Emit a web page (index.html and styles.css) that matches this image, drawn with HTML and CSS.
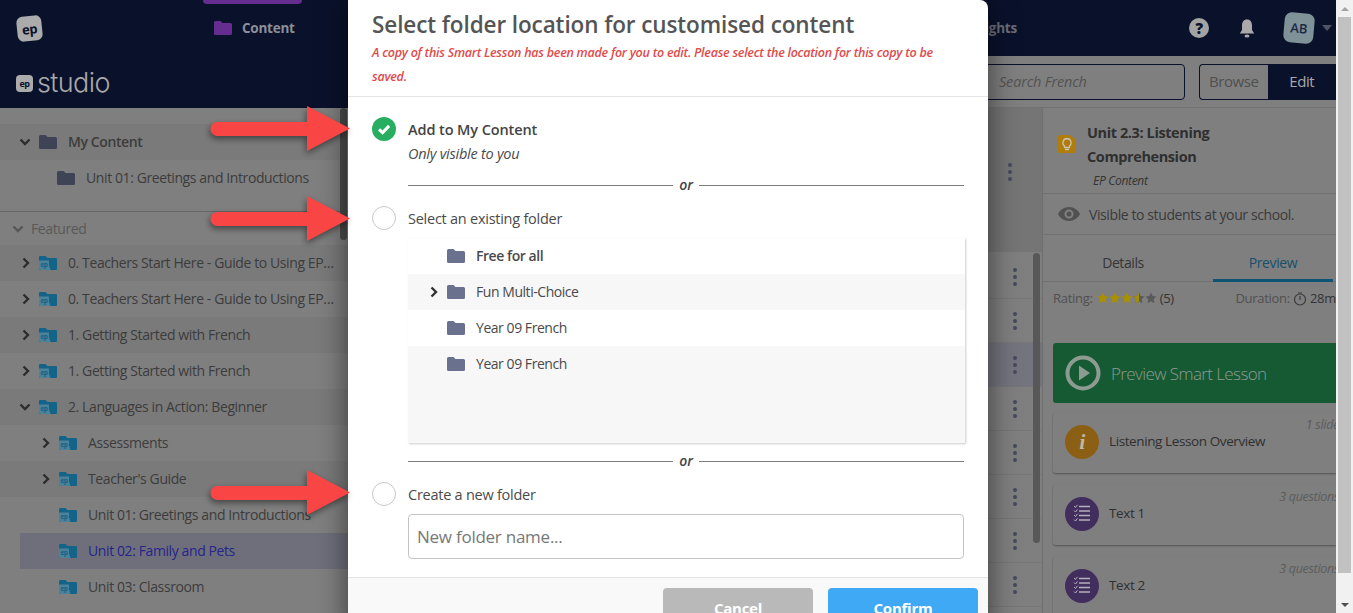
FILE: index.html
```html
<!DOCTYPE html>
<html lang="en">
<head>
<meta charset="utf-8">
<title>EP Studio</title>
<link rel="stylesheet" href="styles.css">
</head>
<body>
<svg class="defs" width="0" height="0" aria-hidden="true">
  <defs>
    <symbol id="folder" viewBox="0 0 18 14"><path d="M1.5 0H6.5L8.5 2H16.5A1.5 1.5 0 0 1 18 3.500V12.500A1.500 1.500 0 0 1 16.500 14H1.500A1.500 1.500 0 0 1 0 12.500V1.500A1.500 1.500 0 0 1 1.500 0Z" fill="currentColor"/></symbol>
    <symbol id="epfolder" viewBox="0 0 18 14"><path d="M1 0H6.500L8.500 2H17A1 1 0 0 1 18 3V13A1 1 0 0 1 17 14H1A1 1 0 0 1 0 13V1A1 1 0 0 1 1 0Z" fill="#14648a"/><path d="M0 4.500H10V9.500L11.500 14H1A1 1 0 0 1 0 13Z" fill="#4b8199"/><text x="5" y="11" font-size="6.500" font-weight="700" text-anchor="middle" fill="#14648a" font-family="Open Sans">ep</text></symbol>
    <symbol id="chev-r" viewBox="0 0 8 12"><path d="M1.500 1.500L6 6L1.500 10.500" fill="none" stroke="currentColor" stroke-width="2.400"/></symbol>
    <symbol id="chev-d" viewBox="0 0 12 8"><path d="M1.500 1.500L6 6L10.500 1.500" fill="none" stroke="currentColor" stroke-width="2.400"/></symbol>
    <symbol id="dots" viewBox="0 0 4 18"><circle cx="2" cy="2" r="2" fill="currentColor"/><circle cx="2" cy="9" r="2" fill="currentColor"/><circle cx="2" cy="16" r="2" fill="currentColor"/></symbol>
    <symbol id="list" viewBox="0 0 34 34"><circle cx="17" cy="17" r="17" fill="#412e5c"/><g stroke="#b5b0bd" fill="none"><path d="M14 9.500H25M14 14H25M14 18.500H25M14 23H25" stroke-width="1.600"/><path d="M9 9L10.500 10.500L12.500 7.800M9 13.500L10.500 15L12.500 12.300M9 18L10.500 19.500L12.500 16.800M9 22.500L10.500 24L12.500 21.300" stroke-width="1"/></g></symbol>
    <symbol id="star" viewBox="0 0 12 12"><path d="M6 .5L7.700 4.100L11.500 4.600L8.700 7.300L9.400 11.200L6 9.300L2.600 11.200L3.300 7.300L.5 4.600L4.300 4.100Z" fill="currentColor"/></symbol>
    <symbol id="star-half" viewBox="0 0 12 12"><path d="M6 .5L7.700 4.100L11.500 4.600L8.700 7.300L9.400 11.200L6 9.300L2.600 11.200L3.300 7.300L.5 4.600L4.300 4.100Z" fill="#5a5a5a"/><path d="M6 .5V9.300L2.600 11.200L3.300 7.300L.5 4.600L4.300 4.100Z" fill="currentColor"/></symbol>
  </defs>
</svg>

<div class="app">
  <div class="page">
    <header class="topbar">
      <div class="brand-badge">ep</div>
      <nav class="nav">
        <div class="nav-item">
          <svg class="nav-folder"><use href="#folder"/></svg>
          <span>Content</span>
        </div>
        <div class="nav-item nav-insights">Insights</div>
      </nav>
      <div class="top-tools">
        <div class="help">?</div>
        <svg class="bell" viewBox="0 0 16 20"><path d="M8 1.500C4.500 1.500 3 4.200 3 7.500V12L.8 15.500H15.200L13 12V7.500C13 4.200 11.500 1.500 8 1.500Z" fill="currentColor"/><ellipse cx="8" cy="18" rx="2.500" ry="1.500" fill="currentColor"/></svg>
        <div class="avatar">AB</div>
        <div class="caret"></div>
      </div>
    </header>

    <div class="workspace">
      <aside class="sidebar">
        <div class="studio-head">
          <span class="studio-badge">ep</span>
          <span class="studio-word">studio</span>
        </div>
        <div class="tree-wrap">
          <div class="tree">
            <div class="tree-top"></div>
            <div class="row alt l0"><svg class="chev-d"><use href="#chev-d"/></svg><svg class="ico plain"><use href="#folder"/></svg><b>My Content</b></div>
            <div class="row l0 nochev-mine"><svg class="ico plain"><use href="#folder"/></svg><span>Unit 01: Greetings and Introductions</span></div>
            <div class="tree-gap"></div>
            <div class="featured"><svg class="chev-d soft"><use href="#chev-d"/></svg>Featured</div>
            <div class="row alt l0"><svg class="chev-r"><use href="#chev-r"/></svg><svg class="ico"><use href="#epfolder"/></svg><span class="trunc">0. Teachers Start Here - Guide to Using EP Studio for French</span></div>
            <div class="row l0"><svg class="chev-r"><use href="#chev-r"/></svg><svg class="ico"><use href="#epfolder"/></svg><span class="trunc">0. Teachers Start Here - Guide to Using EP Studio for French</span></div>
            <div class="row alt l0"><svg class="chev-r"><use href="#chev-r"/></svg><svg class="ico"><use href="#epfolder"/></svg><span>1. Getting Started with French</span></div>
            <div class="row l0"><svg class="chev-r"><use href="#chev-r"/></svg><svg class="ico"><use href="#epfolder"/></svg><span>1. Getting Started with French</span></div>
            <div class="row alt l0"><svg class="chev-d"><use href="#chev-d"/></svg><svg class="ico"><use href="#epfolder"/></svg><span>2. Languages in Action: Beginner</span></div>
            <div class="row l1"><svg class="chev-r"><use href="#chev-r"/></svg><svg class="ico"><use href="#epfolder"/></svg><span>Assessments</span></div>
            <div class="row alt l1"><svg class="chev-r"><use href="#chev-r"/></svg><svg class="ico"><use href="#epfolder"/></svg><span>Teacher's Guide</span></div>
            <div class="row l1 leaf"><svg class="ico"><use href="#epfolder"/></svg><span>Unit 01: Greetings and Introductions</span></div>
            <div class="row selected"><svg class="ico"><use href="#epfolder"/></svg><span>Unit 02: Family and Pets</span></div>
            <div class="row l1 leaf"><svg class="ico"><use href="#epfolder"/></svg><span>Unit 03: Classroom</span></div>
          </div>
          <div class="side-scroll"></div>
        </div>
      </aside>

      <section class="content">
        <div class="toolbar">
          <div class="search"><span>Search French</span></div>
          <div class="modes"><span class="mode">Browse</span><span class="mode on">Edit</span></div>
        </div>
        <div class="panes">
          <div class="middle">
            <div class="mid-head"><svg class="dots top-dots"><use href="#dots"/></svg></div>
            <div class="mid-list">
              <div class="mid-rows">
                <div class="mid-row"><svg class="dots"><use href="#dots"/></svg></div>
                <div class="mid-row"><svg class="dots"><use href="#dots"/></svg></div>
                <div class="mid-row sel"><svg class="dots"><use href="#dots"/></svg></div>
                <div class="mid-row"><svg class="dots"><use href="#dots"/></svg></div>
                <div class="mid-row"><svg class="dots"><use href="#dots"/></svg></div>
                <div class="mid-row"><svg class="dots"><use href="#dots"/></svg></div>
                <div class="mid-row"><svg class="dots"><use href="#dots"/></svg></div>
                <div class="mid-row"><svg class="dots"><use href="#dots"/></svg></div>
              </div>
              <div class="mid-scroll"></div>
            </div>
          </div>
          <aside class="detail">
            <div class="d-title">
              <svg class="bulb" viewBox="0 0 18 18"><path d="M1.500 0H12L18 5V16.500A1.500 1.500 0 0 1 16.500 18H1.500A1.500 1.500 0 0 1 0 16.500V1.500A1.500 1.500 0 0 1 1.500 0Z" fill="#b07c0b"/><path d="M9 3.500A4.200 4.200 0 0 0 6.500 11V12.500H11.500V11A4.200 4.200 0 0 0 9 3.500ZM7 14.500H11" fill="none" stroke="#c9c2b0" stroke-width="1.300"/></svg>
              <div class="d-title-text">
                <h2>Unit 2.3: Listening Comprehension</h2>
                <em>EP Content</em>
              </div>
            </div>
            <div class="d-vis">
              <svg class="eye" viewBox="0 0 22 14"><path fill-rule="evenodd" d="M11 0C6 0 2 3 0 7C2 11 6 14 11 14S20 11 22 7C20 3 16 0 11 0ZM11 2.500A4.500 4.500 0 1 1 11 11.500A4.500 4.500 0 0 1 11 2.500Z" fill="#515151"/><circle cx="11" cy="7" r="2.500" fill="#515151"/></svg>
              <span>Visible to students at your school.</span>
            </div>
            <div class="tabs">
              <div class="tab">Details</div>
              <div class="tab active">Preview</div>
            </div>
            <div class="meta">
              <span class="rating">Rating:
                <span class="stars"><svg><use href="#star"/></svg><svg><use href="#star"/></svg><svg><use href="#star"/></svg><svg><use href="#star-half"/></svg><svg class="off"><use href="#star"/></svg></span> <i>(5)</i></span>
              <span class="duration">Duration: <svg class="timer" viewBox="0 0 14 14"><circle cx="7" cy="7.500" r="5.500" fill="none" stroke="#3a3a3a" stroke-width="1.200"/><path d="M5 1H9M7 4V8" stroke="#3a3a3a" stroke-width="1.200"/></svg> <i>28m</i></span>
            </div>
            <div class="play-btn">
              <svg class="play" viewBox="0 0 36 36"><circle cx="18" cy="18" r="15.500" fill="none" stroke="#8d9b91" stroke-width="4"/><path d="M14 10.500L25 18L14 25.500Z" fill="#8d9b91"/></svg>
              <span>Preview Smart Lesson</span>
            </div>
            <div class="card">
              <div class="info">i</div>
              <span>Listening Lesson Overview</span>
              <em class="count">1 slide</em>
            </div>
            <div class="card">
              <svg class="list"><use href="#list"/></svg>
              <span>Text 1</span>
              <em class="count">3 questions</em>
            </div>
            <div class="card">
              <svg class="list"><use href="#list"/></svg>
              <span>Text 2</span>
              <em class="count">3 questions</em>
            </div>
          </aside>
        </div>
      </section>
    </div>
  </div>
  <div class="scrollbar">
    <div class="sb-btn"><span class="tri-up"></span></div>
    <div class="sb-thumb"></div>
    <div class="sb-btn sb-end"><span class="tri-down"></span></div>
  </div>
</div>

<div class="modal">
  <div class="m-head">
    <h1>Select folder location for customised content</h1>
    <p>A copy of this Smart Lesson has been made for you to edit. Please select the location for this copy to be saved.</p>
  </div>
  <div class="m-body">
    <div class="opt first">
      <svg class="check" viewBox="0 0 22 22"><circle cx="11" cy="11" r="11" fill="#27ae60"/><path d="M6.500 11.300L9.700 14.300L15.700 8.200" fill="none" stroke="#fff" stroke-width="2.800"/></svg>
      <div class="opt-text"><strong>Add to My Content</strong><em>Only visible to you</em></div>
    </div>
    <div class="or"><span>or</span></div>
    <div class="opt"><div class="radio"></div><div class="opt-label">Select an existing folder</div></div>
    <div class="picker">
      <div class="p-row"><svg class="p-folder"><use href="#folder"/></svg><b>Free for all</b></div>
      <div class="p-row tint"><svg class="p-chev"><use href="#chev-r"/></svg><svg class="p-folder"><use href="#folder"/></svg><span>Fun Multi-Choice</span></div>
      <div class="p-row"><svg class="p-folder"><use href="#folder"/></svg><span>Year 09 French</span></div>
      <div class="p-row tint"><svg class="p-folder"><use href="#folder"/></svg><span>Year 09 French</span></div>
    </div>
    <div class="or or2"><span>or</span></div>
    <div class="opt opt3"><div class="radio"></div><div class="opt-label">Create a new folder</div></div>
    <input class="name" type="text" placeholder="New folder name...">
  </div>
  <div class="m-foot">
    <div class="btn cancel">Cancel</div>
    <div class="btn confirm">Confirm</div>
  </div>
</div>

<svg class="arrow a1" viewBox="0 0 150 56"><path d="M16.500 16H106V0L149 22.500L106 45V30H16.500A7 7 0 0 1 16.500 16Z" fill="#fa4545"/></svg>
<svg class="arrow a2" viewBox="0 0 150 56"><path d="M16.500 16H106V0L149 22.500L106 45V30H16.500A7 7 0 0 1 16.500 16Z" fill="#fa4545"/></svg>
<svg class="arrow a3" viewBox="0 0 150 56"><path d="M16.500 16H106V0L149 22.500L106 45V30H16.500A7 7 0 0 1 16.500 16Z" fill="#fa4545"/></svg>
</body>
</html>
```

FILE: styles.css
```css
* { box-sizing: border-box; }
html, body { margin: 0; height: 613px; overflow: hidden; }
body { font-family: "Open Sans", "Noto Sans", sans-serif; font-size: 14px; color: #3c3c3c; letter-spacing: -.4px; background: #7f7f7f; }
.defs { position: absolute; }
em { font-style: italic; }
h1, h2, p { margin: 0; }

.app { display: flex; height: 613px; }
.page { width: 1336px; height: 613px; display: flex; flex-direction: column; overflow: hidden; position: relative; }

/* top bar */
.topbar { height: 56px; flex: none; background: #0a112b; display: flex; align-items: center; padding-left: 17px; }
.brand-badge { width: 25px; height: 25px; border-radius: 6px; background: #ababab; color: #0a112b; font-size: 13px; font-weight: 700; display: flex; align-items: center; justify-content: center; transform: rotate(-6deg); }
.nav { flex: 1; display: flex; align-items: center; height: 56px; padding-left: 172px; }
.nav-item { display: flex; align-items: center; gap: 10px; font-weight: 700; color: #8b8f99; font-size: 13.500px; letter-spacing: -.25px; position: relative; height: 56px; }
.nav-item:first-child::before { content: ""; position: absolute; left: -11px; top: 0; width: 99px; height: 4px; background: #662d91; border-radius: 0 0 4px 4px; }
.nav-folder { width: 18px; height: 14px; color: #662d91; }
.nav-insights { margin-left: 671px; width: 89px; color: #6b6e78; }
.top-tools { display: flex; align-items: center; height: 56px; margin-right: 4px; }
.help { width: 20px; height: 20px; border-radius: 50%; background: #a3a3a3; color: #0a112b; font-weight: 800; font-size: 15px; display: flex; align-items: center; justify-content: center; }
.bell { width: 16px; height: 20px; color: #a9a9a9; margin-left: 30px; }
.avatar { width: 30px; height: 30px; border-radius: 7px; background: #7f9298; color: #1c2744; font-size: 13px; font-weight: 600; letter-spacing: 0; display: flex; align-items: center; justify-content: center; transform: rotate(5deg); margin-left: 29px; }
.caret { width: 0; height: 0; border: 5px solid transparent; border-top: 6px solid #4f5464; border-bottom: 0; margin-left: 8px; }

/* left */
.workspace { flex: 1; display: flex; min-height: 0; }
.sidebar { width: 348px; flex: none; display: flex; flex-direction: column; }
.studio-head { height: 52px; flex: none; background: #0a112b; display: flex; align-items: center; padding-left: 16px; gap: 4px; }
.studio-badge { width: 17px; height: 17px; border-radius: 4px; background: #ababab; color: #0a112b; font-size: 9px; font-weight: 700; display: flex; align-items: center; justify-content: center; margin-top: 3px; }
.studio-word { font-family: Inter, "Open Sans", sans-serif; font-size: 27px; font-weight: 300; color: #a9a9a9; letter-spacing: -.6px; }
.tree-wrap { flex: 1; display: flex; background: #7f7f7f; position: relative; min-height: 0; }
.tree { width: 348px; }
.tree-top { height: 16px; }
.tree-gap { height: 16px; border-bottom: 1px solid #666; }
.row { height: 36px; display: flex; align-items: center; padding-left: 20px; padding-bottom: 1px; white-space: nowrap; font-size: 14px; color: #3c3c3c; }
.row.alt { background: #7a7a7a; }
.row b { font-weight: 600; }
.row.l1 { padding-left: 40px; }
.row.l1.leaf { padding-left: 59px; }
.row.nochev-mine { padding-left: 57px; }
.row.nochev-mine .ico { margin-right: 11px; }
.row.selected { background: #6f6f7c; color: #25258a; margin-left: 20px; padding-left: 39px; }
.featured { height: 33px; display: flex; align-items: center; padding-left: 12px; color: #595959; font-size: 14px; }
.chev-d { width: 12px; height: 8px; margin-right: 8px; margin-left: -1px; color: #2d2d2d; flex: none; }
.chev-d.soft { color: #575757; margin-left: 0; margin-right: 7px; }
.chev-r { width: 8px; height: 12px; margin-left: 2px; margin-right: 9px; color: #2d2d2d; flex: none; }
.ico { width: 18px; height: 14px; margin-right: 11px; flex: none; }
.ico.plain { color: #3e4356; }
.trunc { width: 268px; overflow: hidden; text-overflow: ellipsis; }
.side-scroll { position: absolute; left: 340px; top: 0; width: 7px; height: 132px; background: #4c4c4c; border-radius: 4px; }

/* content */
.content { flex: 1; display: flex; flex-direction: column; min-width: 0; }
.toolbar { height: 52px; flex: none; background: #7f7f7f; display: flex; align-items: center; justify-content: flex-end; border-bottom: 1px solid #727272; }
.search { width: 240px; height: 36px; border: 1px solid #0a112b; border-radius: 4px; display: flex; align-items: center; padding-left: 53px; font-style: italic; color: #535353; font-size: 14.500px; letter-spacing: -.2px; margin-right: 14px; }
.modes { width: 137px; height: 36px; border: 1px solid #0a112b; border-right: 0; border-radius: 4px 0 0 4px; display: flex; overflow: hidden; }
.mode { width: 68px; display: flex; align-items: center; justify-content: center; padding-bottom: 2px; color: #4f4f4f; font-size: 15px; }
.mode.on { width: 69px; background: #0a112b; color: #a9a9a9; }
.panes { flex: 1; display: flex; min-height: 0; }
.middle { width: 694px; flex: none; display: flex; flex-direction: column; background: #6f6f6f; }
.mid-head { height: 144px; flex: none; background: #757575; position: relative; }
.top-dots { position: absolute; left: 660px; top: 55px; }
.mid-list { flex: 1; display: flex; background: #7f7f7f; position: relative; min-height: 0; }
.mid-rows { width: 100%; padding-top: 3px; }
.mid-row { height: 44px; display: flex; align-items: center; justify-content: flex-end; padding-right: 25px; border-bottom: 1px solid #777; }
.mid-row.sel { background: #74747f; }
.dots { width: 4px; height: 18px; color: #454a5c; }
.mid-scroll { position: absolute; left: 685px; top: 1px; width: 7px; height: 290px; background: #585858; border-radius: 4px; }
.detail { flex: 1; min-width: 0; border-left: 1px solid #6e6e6e; background: #7f7f7f; overflow: hidden; }
.d-title { height: 86px; display: flex; padding: 13px 0 0 15px; border-bottom: 1px solid #727272; }
.bulb { width: 18px; height: 18px; margin-top: 14px; flex: none; }
.d-title-text { padding-left: 11px; width: 190px; }
.d-title-text h2 { font-size: 14.500px; font-weight: 700; line-height: 24px; color: #2f2f2f; }
.d-title-text em { display: block; margin-left: 6px; font-size: 12px; line-height: 24px; color: #333; letter-spacing: -.3px; }
.d-vis { height: 41px; display: flex; align-items: center; padding-left: 15px; gap: 9px; border-bottom: 1px solid #727272; color: #3a3a3a; font-size: 14px; }
.eye { width: 22px; height: 14px; }
.tabs { height: 47px; display: flex; border-bottom: 1px solid #727272; }
.tab { width: 160px; display: flex; align-items: center; justify-content: center; color: #353535; font-size: 14px; padding-top: 8px; }
.tab.active { width: 120px; margin-left: 10px; color: #17506a; border-bottom: 3px solid #0f5573; padding-top: 11px; height: 47px; margin-bottom: -1px; }
.meta { height: 61px; display: flex; padding: 7px 0 0 10px; white-space: nowrap; font-size: 13px; letter-spacing: -.3px; color: #505050; overflow: hidden; }
.rating { width: 197px; }
.rating i, .duration i { font-style: normal; color: #333; }
.stars { display: inline-flex; vertical-align: -1px; color: #a89000; margin-left: 1px; }
.stars svg { width: 12px; height: 12px; }
.stars .off { color: #5a5a5a; }
.timer { width: 14px; height: 14px; vertical-align: -3px; }
.play-btn { height: 60px; margin-left: 10px; background: #155a33; border-radius: 3px 0 0 3px; display: flex; align-items: center; padding-left: 12px; gap: 10px; color: #8d9b91; font-size: 17px; font-weight: 300; letter-spacing: -.6px; }
.play { width: 36px; height: 36px; }
.card { height: 60px; margin: 10px 0 12px 10px; background: #7f7f7f; border-radius: 3px 0 0 3px; box-shadow: 0 1px 2px rgba(0,0,0,.35); display: flex; align-items: center; padding: 0 0 2px 12px; gap: 10px; position: relative; font-size: 13.500px; color: #2f2f2f; }
.card > span { margin-top: -3px; }
.card .count { position: absolute; right: -3px; top: 3px; font-size: 12.500px; letter-spacing: -.3px; color: #5c5c5c; white-space: nowrap; }
.info { width: 34px; height: 34px; border-radius: 50%; background: #8b6014; color: #bdb7a6; font-family: "Liberation Serif", serif; font-style: italic; font-weight: 700; font-size: 22px; display: flex; align-items: center; justify-content: center; }
.list { width: 34px; height: 34px; }

/* scrollbar */
.scrollbar { width: 17px; flex: none; background: #f1f1f1; display: flex; flex-direction: column; }
.sb-btn { height: 17px; flex: none; display: flex; align-items: center; justify-content: center; }
.sb-thumb { height: 556px; flex: none; background: #c1c1c1; margin: 0 2px; }
.sb-end { margin-top: auto; }
.tri-up { border: 4px solid transparent; border-bottom: 4px solid #a3a3a3; border-top: 0; width: 0; height: 0; }
.tri-down { border: 4px solid transparent; border-top: 4px solid #505050; border-bottom: 0; width: 0; height: 0; }

/* modal */
.modal { position: absolute; left: 348px; top: 0; width: 640px; height: 640px; background: #fff; border-radius: 0 8px 0 0; box-shadow: 0 0 30px rgba(0,0,0,.55); display: flex; flex-direction: column; color: #4a4a4a; letter-spacing: -.25px; }
.m-head { height: 97px; flex: none; padding: 8px 24px 0; border-bottom: 1px solid #e5e5e5; }
.m-head h1 { font-size: 22.500px; font-weight: 600; line-height: 34px; color: #555; letter-spacing: -.1px; }
.m-head p { font-size: 12.500px; font-weight: 600; font-style: italic; line-height: 24px; color: #e04b4b; margin-top: -1px; }
.m-body { height: 480px; flex: none; padding: 20px 24px 0 24px; }
.opt { display: flex; height: 24px; align-items: center; }
.opt.first { height: 55px; align-items: flex-start; }
.check { width: 24px; height: 24px; flex: none; }
.radio { width: 24px; height: 24px; border-radius: 50%; border: 1px solid #c9c9c9; flex: none; }
.opt-text { padding-left: 12px; display: flex; flex-direction: column; font-size: 14.500px; line-height: 24px; padding-top: 1px; }
.opt-text strong { font-weight: 600; color: #444; letter-spacing: -.1px; }
.opt-text em { color: #4a4a4a; font-size: 14.500px; }
.opt-label { padding-left: 12px; font-size: 14.500px; }
.or { margin: 13px 0 20px 36px; width: 556px; height: 1px; background: #7d7d7d; position: relative; }
.or span { position: absolute; left: 265px; top: -11px; width: 26px; height: 22px; line-height: 22px; text-align: center; background: #fff; font-style: italic; font-weight: 600; font-size: 14px; color: #444; }
.picker { margin: 8px 0 0 36px; width: 557px; height: 205px; background: #f7f7f7; box-shadow: 1px 1px 2px rgba(0,0,0,.2); }
.p-row { height: 36px; display: flex; align-items: center; padding-left: 39px; background: #fff; font-size: 14px; letter-spacing: -.45px; color: #4a4a4a; position: relative; }
.p-row.tint { background: #f7f7f7; }
.p-row b { font-weight: 600; margin-top: -2px; }
.p-row span { margin-top: -2px; }
.p-folder { width: 18px; height: 14px; color: #69718f; margin-right: 11px; }
.p-chev { width: 8px; height: 12px; color: #333; position: absolute; left: 22px; }
.or2 { margin-top: 18px; margin-bottom: 20px; }
.opt3 { margin-bottom: 8px; }
.name { display: block; margin-left: 36px; width: 556px; height: 45px; border: 1px solid #c4c4c4; border-radius: 4px; padding: 0 8px; font-family: inherit; font-size: 17px; color: #777; outline: 0; background: #fff; letter-spacing: -.25px; }
.name::placeholder { color: #777; opacity: 1; }
.m-foot { flex: 1; background: #f9f9f9; border-top: 1px solid #e5e5e5; display: flex; justify-content: flex-end; gap: 15px; padding: 10px 10px 0 0; }
.btn { width: 150px; height: 40px; border-radius: 4px; color: #fff; font-weight: 700; font-size: 15px; display: flex; align-items: center; justify-content: center; }
.cancel { background: #b9b9b9; }
.confirm { background: #3fa9f5; }

/* annotation arrows */
.arrow { position: absolute; left: 201px; width: 150px; height: 56px; overflow: visible; filter: drop-shadow(-1px 3px 3px rgba(0,0,0,.45)); }
.a1 { top: 106px; }
.a2 { top: 196px; }
.a3 { top: 470px; }
```
